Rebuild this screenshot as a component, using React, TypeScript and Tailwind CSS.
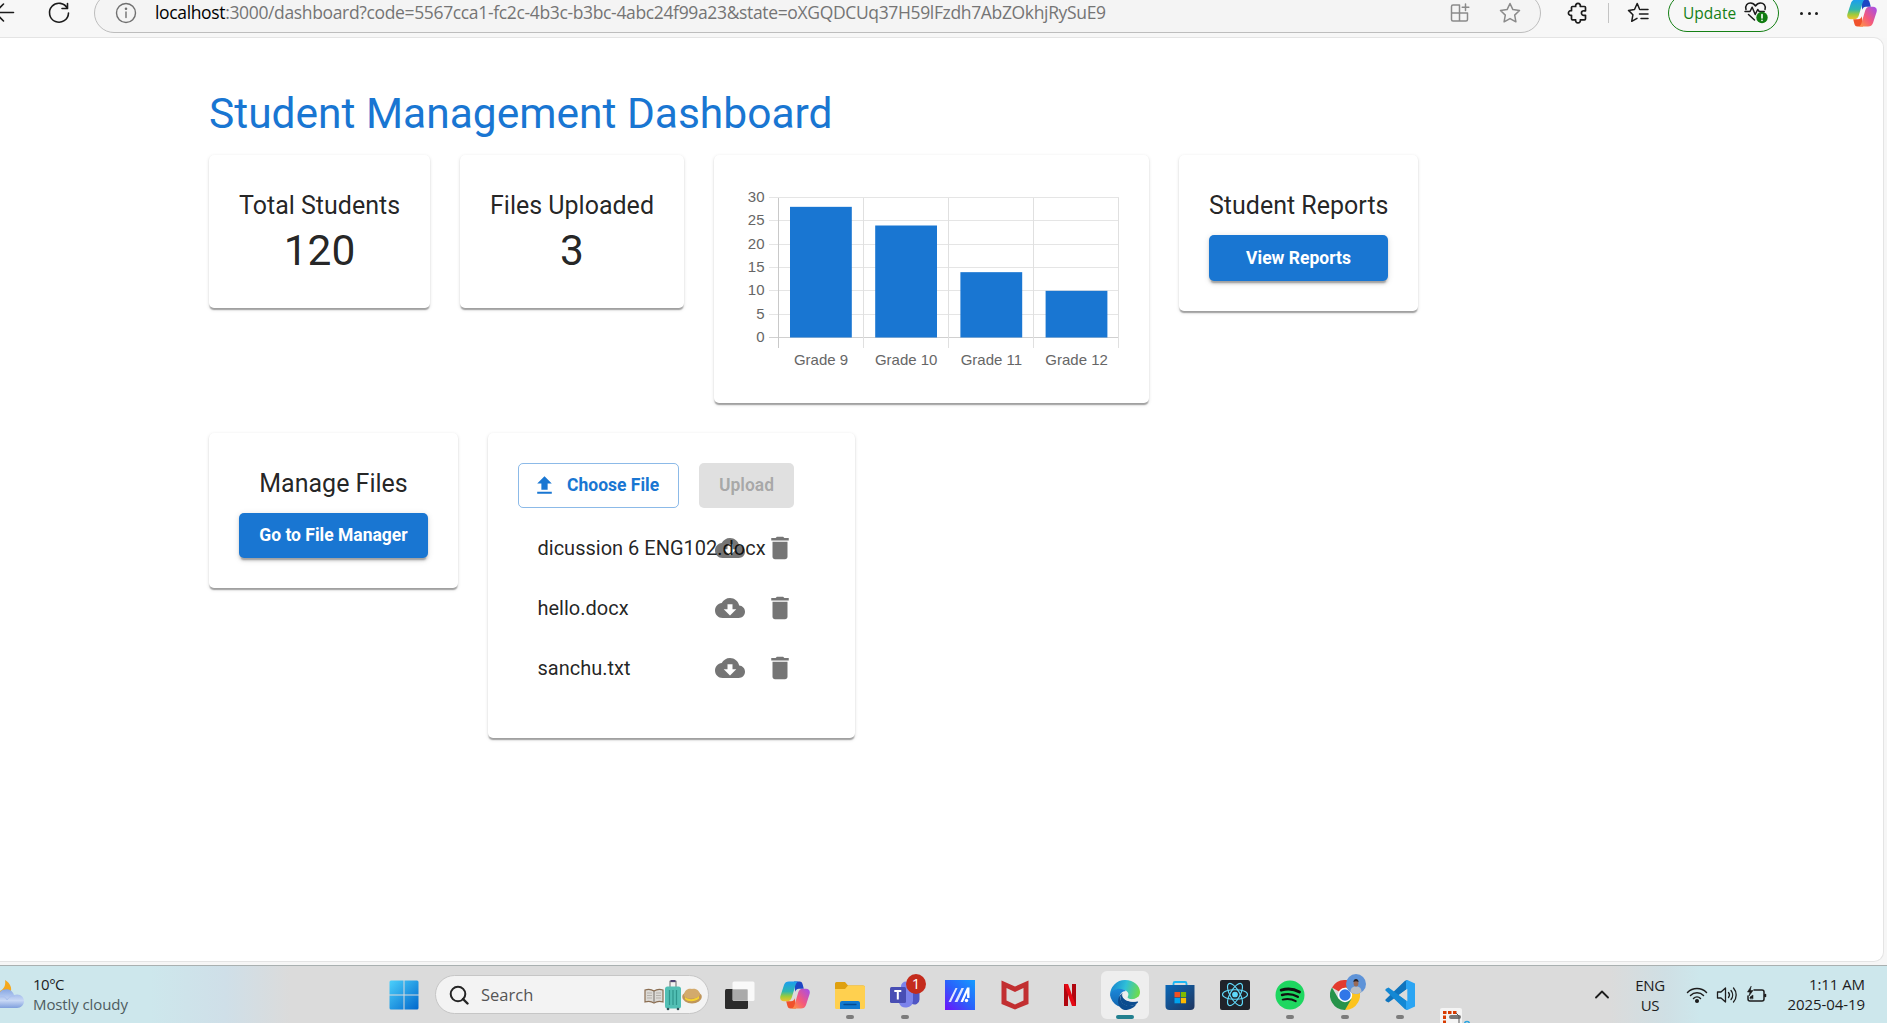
import React from "react";

const SEGOE = "font-['Open_Sans','Noto_Sans',sans-serif]";

function BackIcon() {
  return (
    <svg className="-ml-[9px] shrink-0" width="24" height="24" viewBox="0 0 24 24" fill="none" stroke="#1b1b1b" strokeWidth="1.6" strokeLinecap="round" strokeLinejoin="round">
      <path d="M22.500 11.500H4M12.500 3l-8.500 8.500 8.500 8.500" />
    </svg>
  );
}

function ReloadIcon() {
  return (
    <svg className="shrink-0" width="24" height="24" viewBox="0 0 24 24" fill="none" stroke="#1b1b1b" strokeWidth="1.6" strokeLinecap="round" strokeLinejoin="round">
      <path d="M20.500 7.500A9.500 9.500 0 1 0 21.500 12M20.500 2.500v5h-5.500" />
    </svg>
  );
}

function InfoIcon() {
  return (
    <svg className="shrink-0" width="22" height="22" viewBox="0 0 22 22" fill="none" stroke="#707070" strokeWidth="1.4" strokeLinecap="round">
      <circle cx="11" cy="11" r="9.500" />
      <path d="M11 10v5.500" />
      <circle cx="11" cy="6.800" r=".6" fill="#707070" />
    </svg>
  );
}

function AppsIcon() {
  return (
    <svg className="shrink-0" width="20" height="20" viewBox="0 0 20 20" fill="none" stroke="#8a8a8a" strokeWidth="1.500" strokeLinejoin="round" strokeLinecap="round">
      <path d="M9.500 2H3A1.500 1.500 0 0 0 1.500 3.500v13A1.500 1.500 0 0 0 3 18h13a1.500 1.500 0 0 0 1.500-1.500V10h-16M9.500 2v16M15.500 1v6.500M12.200 4.200h6.600" />
    </svg>
  );
}

function StarIcon() {
  return (
    <svg className="shrink-0" width="22" height="22" viewBox="0 0 22 22" fill="none" stroke="#8a8a8a" strokeWidth="1.500" strokeLinejoin="round">
      <path d="M11 1.500l2.900 6.100 6.600.9-4.800 4.600 1.200 6.700-5.900-3.200-5.900 3.200 1.200-6.700L1.500 8.500l6.600-.9z" />
    </svg>
  );
}

function PuzzleIcon() {
  return (
    <svg className="shrink-0" width="22" height="22" viewBox="0 0 22 22" fill="none" stroke="#1b1b1b" strokeWidth="1.700" strokeLinejoin="round">
      <path d="M5.500 4.500h3.200a2.400 2.400 0 1 1 4.600 0h4.200a1 1 0 0 1 1 1v3.300h-1.300a2.300 2.300 0 1 0 0 4.500h1.300v3.500a1 1 0 0 1-1 1h-4.200a2.400 2.400 0 1 1-4.600 0H5.500a1 1 0 0 1-1-1v-3.500a2.400 2.400 0 1 1 0-4.600V5.500a1 1 0 0 1 1-1z" />
    </svg>
  );
}

function FavoritesIcon() {
  return (
    <svg className="shrink-0" width="22" height="22" viewBox="0 0 22 22" fill="none" stroke="#1b1b1b" strokeWidth="1.500" strokeLinejoin="round" strokeLinecap="round">
      <path d="M13 7.500h-.3L10.200 1.500 7.500 7.500l-6 .9 4.400 4.400-1.200 6.500 5.300-3M14 7.500h7M12.500 12h8.500M14 16.500h7" />
    </svg>
  );
}

function HealthIcon() {
  return (
    <svg className="shrink-0" width="24" height="24" viewBox="0 0 24 24" fill="none" stroke="#1b1b1b" strokeWidth="1.500" strokeLinejoin="round" strokeLinecap="round">
      <path d="M2 8.500C.8 4.500 3.500 2 6.500 2c2.300 0 4 1.500 5 3 1-1.500 2.700-3 5-3 3 0 5.700 2.500 4.500 6.500M1 10.500h5l2.200-4.300 3 7.300 2.500-5 1.500 2h5M4.500 13.500l6 5.500" />
      <circle cx="18" cy="16.500" r="5.700" fill="#107c10" stroke="none" />
      <path d="M18 13.500V17M18 19.400v.1" stroke="#fff" strokeWidth="1.600" />
    </svg>
  );
}

function CopilotIcon({ id }: { id: string }) {
  return (
    <svg className="shrink-0" width="30" height="28" viewBox="0 0 30 28">
      <defs>
        <linearGradient id={id + "a"} x1="0" y1="0" x2="0" y2="1">
          <stop offset="0" stopColor="#1b9df0" />
          <stop offset=".5" stopColor="#2fb7b0" />
          <stop offset=".75" stopColor="#9ccb3b" />
          <stop offset="1" stopColor="#f2c230" />
        </linearGradient>
        <linearGradient id={id + "b"} x1="0" y1="1" x2="1" y2="0">
          <stop offset="0" stopColor="#ff9b3d" />
          <stop offset=".45" stopColor="#f4597b" />
          <stop offset="1" stopColor="#a14df0" />
        </linearGradient>
      </defs>
      <path d="M14 .5h5.500c2 0 2.700 1.200 3.200 3l1.100 4.200H19c-2 0-3.200 1-3.800 3z" fill="#1d46c4" />
      <path d="M16 27.500h-5.500c-2 0-2.700-1.200-3.200-3l-1.100-4.200H11c2 0 3.200-1 3.800-3z" fill="#f0522c" />
      <path d="M9 .5h9.500c-1.800.5-2.500 2-3 3.600l-3.700 12.400c-.7 2.400-2 3.800-4.600 3.800H4c-3 0-4.500-2.200-3.500-5.500L4 4C4.800 1.600 6.500.5 9 .5z" fill={"url(#" + id + "a)"} />
      <path d="M21 27.500h-9.500c1.800-.5 2.500-2 3-3.600l3.700-12.400c.7-2.400 2-3.800 4.600-3.800H26c3 0 4.500 2.200 3.500 5.500L26 24c-.8 2.400-2.500 3.500-5 3.500z" fill={"url(#" + id + "b)"} />
    </svg>
  );
}

function BrowserBar() {
  return (
    <header className="h-[38px] shrink-0 overflow-hidden bg-[#f7f7f7]">
      <div className="-mt-[7px] flex h-[40px] items-center">
        <BackIcon />
        <div className="ml-[32px] flex"><ReloadIcon /></div>
        <div className="ml-[23px] flex h-[40px] w-[1447px] shrink-0 items-center rounded-full border border-[#bdbdbd] bg-[#f4f4f4] pl-[20px] pr-[19px]">
          <InfoIcon />
          <span className={"ml-[18px] w-[953px] whitespace-nowrap pb-[2px] text-[17.5px] leading-6 tracking-[-0.35px] text-[#757575] " + SEGOE}>
            <span className="text-black">localhost</span>
            :3000/dashboard?code=5567cca1-fc2c-4b3c-b3bc-4abc24f99a23&amp;state=oXGQDCUq37H59lFzdh7AbZOkhjRySuE9
          </span>
          <span className="ml-auto flex"><AppsIcon /></span>
          <span className="ml-[29px] flex"><StarIcon /></span>
        </div>
        <div className="ml-[26px] flex"><PuzzleIcon /></div>
        <div className="ml-[19px] h-5 w-px bg-[#c4c4c4]" />
        <div className="ml-[18px] flex"><FavoritesIcon /></div>
        <div className="ml-[19px] flex h-[38px] w-[111px] shrink-0 items-center rounded-full border-[1.5px] border-[#158015] pl-[14px]">
          <span className={"w-[61px] whitespace-nowrap pb-px text-[15.5px] leading-5 text-[#158015] " + SEGOE}>Update</span>
          <HealthIcon />
        </div>
        <div className="ml-[21px] flex w-[18px] justify-between">
          <i className="size-[3px] rounded-full bg-[#1b1b1b]" />
          <i className="size-[3px] rounded-full bg-[#1b1b1b]" />
          <i className="size-[3px] rounded-full bg-[#1b1b1b]" />
        </div>
        <div className="ml-[29px] flex"><CopilotIcon id="cb" /></div>
      </div>
    </header>
  );
}

const CARD =
  "rounded-[5px] bg-white p-[30px] shadow-[0px_2.5px_1.25px_-1.25px_rgba(0,0,0,0.2),0px_1.25px_1.25px_0px_rgba(0,0,0,0.14),0px_1.25px_3.75px_0px_rgba(0,0,0,0.12)]";
const H6 = "h-[40px] whitespace-nowrap pt-px text-center text-[25px] leading-[40px]";
const BUTTON =
  "mt-[10px] flex w-full items-center justify-center whitespace-nowrap rounded-[5px] bg-[#1976d2] text-[17.5px] font-bold text-white shadow-[0px_3.75px_1.25px_-2.5px_rgba(0,0,0,0.2),0px_2.5px_2.5px_0px_rgba(0,0,0,0.14),0px_1.25px_6.25px_0px_rgba(0,0,0,0.12)]";

function Stat({ label, value, width }: { label: string; value: string; width: string }) {
  return (
    <section className={CARD + " h-[153px] " + width}>
      <h2 className={H6}>{label}</h2>
      <p className="text-center text-[42.5px] leading-[52px]">{value}</p>
    </section>
  );
}

const grades = [
  { name: "Grade 9", count: 28 },
  { name: "Grade 10", count: 24 },
  { name: "Grade 11", count: 14 },
  { name: "Grade 12", count: 10 },
];

function GradeChart() {
  const left = 34.5;
  const base = 153;
  const unit = 140 / 30;
  return (
    <svg width="375" height="188" viewBox="0 0 375 188" fontFamily="'Liberation Sans', Arial, sans-serif" fontSize="15" fill="#666">
      {[0, 5, 10, 15, 20, 25, 30].map((v) => {
        const y = Math.round(base - v * unit) - 0.5;
        return (
          <g key={v}>
            <path d={`M25 ${y}H375`} stroke={v === 0 ? "#d0d0d0" : "#e5e5e5"} />
            <text x="20.500" y={y + 4.5} textAnchor="end">{v}</text>
          </g>
        );
      })}
      {[0, 1, 2, 3, 4].map((i) => (
        <path key={i} d={`M${Math.round(left + i * 85) - 0.5} 13V163`} stroke={i === 0 ? "#c9c9c9" : "#e0e0e0"} />
      ))}
      {grades.map((g, i) => (
        <g key={g.name}>
          <rect x={left + i * 85.2 + 11.5} y={base - g.count * unit - 0.5} width="61.8" height={g.count * unit} fill="#1976d2" />
          <text x={left + i * 85.2 + 42.5} y="180" textAnchor="middle">{g.name}</text>
        </g>
      ))}
    </svg>
  );
}

function FileRow({ name }: { name: string }) {
  return (
    <li className="flex h-[60px] items-center pl-[19.5px]">
      <div className="w-[172px] whitespace-nowrap text-[20px] leading-[30px]">{name}</div>
      <div className="ml-[5.5px] flex items-center gap-5 text-black/54">
        <svg width="30" height="30" viewBox="0 0 24 24" fill="currentColor">
          <path d="M19.350 10.040C18.670 6.590 15.640 4 12 4 9.110 4 6.600 5.640 5.350 8.040 2.340 8.360 0 10.910 0 14c0 3.310 2.690 6 6 6h13c2.760 0 5-2.240 5-5 0-2.640-2.050-4.780-4.650-4.960zM17 13l-5 5-5-5h3V9h4v4h3z" />
        </svg>
        <svg width="30" height="30" viewBox="0 0 24 24" fill="currentColor">
          <path d="M6 19c0 1.100.9 2 2 2h8c1.100 0 2-.9 2-2V7H6v12zM19 4h-3.500l-1-1h-5l-1 1H5v2h14V4z" />
        </svg>
      </div>
    </li>
  );
}

function Dashboard() {
  return (
    <main className="h-[925px] w-[1884px] rounded-r-[10px] border border-l-0 border-[#e4e4e4] bg-white pl-[209px] pt-[50px] font-[Roboto,sans-serif] text-black/87">
      <h1 className="mb-[14px] whitespace-nowrap text-[42.5px] leading-[52.5px] text-[#1976d2]">Student Management Dashboard</h1>
      <div className="flex items-start gap-[30px]">
        <Stat label="Total Students" value="120" width="w-[221px]" />
        <Stat label="Files Uploaded" value="3" width="w-[224px]" />
        <section className={CARD + " h-[248px] w-[435px]"}><GradeChart /></section>
        <section className={CARD + " w-[239px]"}>
          <h2 className={H6}>Student Reports</h2>
          <button className={BUTTON + " h-[46px] pt-px"}>View Reports</button>
        </section>
      </div>
      <div className="mt-[30px] flex items-start gap-[30px]">
        <section className={CARD + " w-[249px]"}>
          <h2 className={H6}>Manage Files</h2>
          <button className={BUTTON + " h-[45px]"}>Go to File Manager</button>
        </section>
        <section className={CARD + " h-[305px] w-[367px]"}>
          <div className="flex h-[45px] gap-5 text-[17.5px] font-bold">
            <button className="flex w-[161px] items-center rounded-[5px] border border-[#1976d2]/50 pl-[13px] text-[#1976d2]">
              <svg className="mr-[10px]" width="25" height="25" viewBox="0 0 24 24" fill="currentColor"><path d="M5 20h14v-2H5v2zM5 10h4v6h6v-6h4l-7-7-7 7z" /></svg>
              Choose File
            </button>
            <button className="w-[95px] rounded-[5px] bg-[#e0e0e0] text-black/26">Upload</button>
          </div>
          <ul className="pt-[10px]">
            <FileRow name="dicussion 6 ENG102.docx" />
            <FileRow name="hello.docx" />
            <FileRow name="sanchu.txt" />
          </ul>
        </section>
      </div>
    </main>
  );
}

function WeatherIcon() {
  return (
    <svg className="shrink-0" width="24" height="32" viewBox="0 0 24 32">
      <defs>
        <linearGradient id="cloud" x1="0" y1="0" x2="0" y2="1">
          <stop offset="0" stopColor="#88a8e4" />
          <stop offset=".6" stopColor="#c8d8f5" />
          <stop offset="1" stopColor="#7f9fdd" />
        </linearGradient>
      </defs>
      <path d="M5 1c5 3 8 8 5 14L0 17V12c4-2 6-6 5-11z" fill="#f5a91c" />
      <path d="M0 13c3-4 12-4 14 3 6-2 10 2 10 6s-3 7-7 7H0z" fill="url(#cloud)" />
      <path d="M0 18c3-1 6 0 7 3 2-3 5-5 8-4" fill="none" stroke="#a9c0ee" />
    </svg>
  );
}

function WindowsIcon() {
  return (
    <svg width="30" height="30" viewBox="0 0 30 30">
      <defs>
        <linearGradient id="win" x1="0" y1="0" x2="1" y2="1">
          <stop offset="0" stopColor="#4cd0fb" />
          <stop offset="1" stopColor="#0067cc" />
        </linearGradient>
      </defs>
      <path fill="url(#win)" d="M.5 2a1.500 1.500 0 0 1 1.500-1.500h12.500v14H.5zM15.500.5H28A1.500 1.500 0 0 1 29.500 2v12.500h-14zM.5 15.500h14v14H2A1.500 1.500 0 0 1 .5 28zM15.500 15.500h14V28a1.500 1.500 0 0 1-1.500 1.500H15.500z" />
    </svg>
  );
}

function SearchBox() {
  return (
    <div className="ml-[16.5px] flex h-[39px] w-[274px] shrink-0 items-center rounded-full border border-[#c6c6c6] bg-[#f3f3f3] pl-[13px] pr-[6px]">
      <svg width="20" height="20" viewBox="0 0 20 20" fill="none" stroke="#242424" strokeWidth="2" strokeLinecap="round">
        <circle cx="9" cy="9" r="7.300" />
        <path d="M14 14l4.500 4.500" strokeWidth="2.400" />
      </svg>
      <span className={"ml-[12px] text-[16.5px] leading-5 text-[#555] " + SEGOE}>Search</span>
      <svg className="ml-auto" width="58" height="32" viewBox="0 0 58 32">
        <path d="M1 11c3-1 6-1 9 1 3-2 6-2 9-1v12c-3-1-6-1-9 1-3-2-6-2-9-1z" fill="#dcdad6" stroke="#8b6e52" strokeWidth="1.200" />
        <path d="M10 12v11" stroke="#77706a" />
        <path d="M3 14h5M3 16.500h5M3 19h5M12 14h5M12 16.500h5M12 19h5" stroke="#b5b1ab" fill="none" />
        <path d="M26 8V2.500h6V8" fill="none" stroke="#888" strokeWidth="1.300" />
        <path d="M26.500 2h5" stroke="#4d4372" strokeWidth="2" />
        <rect x="21" y="7.500" width="16" height="22" rx="2.500" fill="#52bfb4" />
        <path d="M25.500 11v15M29 11v15M32.500 11v15" stroke="#2f968d" strokeWidth="1.200" />
        <circle cx="24" cy="30" r="1.300" fill="#32535a" /><circle cx="34" cy="30" r="1.300" fill="#32535a" />
        <ellipse cx="48" cy="18" rx="9.800" ry="6.500" fill="#c0965a" />
        <path d="M40 17c0-6 4-8 8-7 4-1 8 2 8 6-2 4-12 5-16 1z" fill="#d3aa6c" />
        <path d="M41 18c3 3 10 3 14-1v2.500c-4 3.500-11 3.500-14 .5z" fill="#f7d32f" />
      </svg>
    </div>
  );
}

function TaskViewIcon() {
  return (
    <svg width="30" height="30" viewBox="0 0 30 30">
      <rect y="9" width="23" height="20" rx="1.500" fill="#2b2b2b" />
      <rect x="7.500" y="1.500" width="22" height="19.500" rx="1.500" fill="#fff" fillOpacity=".82" />
      <path d="M8 9.500h14.500v11.200H8z" fill="#aaa" />
    </svg>
  );
}

function FolderIcon() {
  return (
    <svg width="30" height="30" viewBox="0 0 30 30">
      <path d="M0 3.500A1.500 1.500 0 0 1 1.500 2H10l3 3.500h15A2 2 0 0 1 30 7.500V15H0z" fill="#dfa00f" />
      <path d="M0 9h10L13 5.500h15.500A1.500 1.500 0 0 1 30 7v20.500a1.500 1.500 0 0 1-1.500 1.500h-27A1.500 1.500 0 0 1 0 27.500z" fill="#ffd04f" />
      <path d="M5 29v-6a2 2 0 0 1 2-2h16a2 2 0 0 1 2 2v6z" fill="#1179cf" />
      <path d="M9 24.500h12" stroke="#064b91" strokeWidth="1.300" strokeLinecap="round" />
    </svg>
  );
}

function TeamsIcon() {
  return (
    <svg width="30" height="30" viewBox="0 0 30 30">
      <circle cx="16" cy="6.500" r="5" fill="#7b83eb" />
      <path d="M20 11h9.500v8.500a5 5 0 0 1-8 4z" fill="#4f56c4" />
      <path d="M9 11h14v10a7.300 7.300 0 0 1-14 2z" fill="#7b83eb" />
      <rect y="7" width="16" height="16" rx="1.500" fill="#484eb4" />
      <path d="M4.300 11h7M7.800 11v8.500" stroke="#fff" strokeWidth="2" />
    </svg>
  );
}

function MsiIcon() {
  return (
    <svg width="30" height="30" viewBox="0 0 30 30">
      <defs>
        <linearGradient id="msi" x1="1" y1="0" x2="0" y2="1">
          <stop offset="0" stopColor="#149cff" />
          <stop offset=".5" stopColor="#2962fb" />
          <stop offset="1" stopColor="#7010fa" />
        </linearGradient>
      </defs>
      <path d="M0 0h30v30H0z" fill="url(#msi)" />
      <path d="M3.500 22L10.500 8h2L6 22zM9.500 22L16.500 8h2.500L12.500 22z" fill="#dfe6ff" />
      <path d="M15.500 22L22 7.500h2.500V18h-2.400v-5.500L18 22z" fill="#fff" />
      <circle cx="21.500" cy="20.500" r="1.700" fill="#fff" />
    </svg>
  );
}

function McAfeeIcon() {
  return (
    <svg width="30" height="30" viewBox="0 0 30 30">
      <path d="M1.500.5L15 6.500 28.500.5V24L15 29.500 1.500 24zM6.500 8v12.500L15 24.500l8.500-4V8L15 12z" fill="#c22f31" fillRule="evenodd" />
    </svg>
  );
}

function NetflixIcon() {
  return (
    <svg width="30" height="30" viewBox="0 0 30 30">
      <path d="M9 4h4v22H9zM17 4h4v22h-4z" fill="#b1060f" />
      <path d="M9 4h4l8 22h-4z" fill="#e50914" />
    </svg>
  );
}

function EdgeIcon() {
  return (
    <svg width="30" height="30" viewBox="0 0 30 30">
      <defs>
        <linearGradient id="edge1" x1="0" y1=".3" x2="1" y2=".5">
          <stop offset="0" stopColor="#1683cf" />
          <stop offset=".5" stopColor="#2fbfd8" />
          <stop offset="1" stopColor="#6edc4b" />
        </linearGradient>
        <linearGradient id="edge2" x1="0" y1="0" x2="0" y2="1">
          <stop offset="0" stopColor="#1c88d9" />
          <stop offset="1" stopColor="#1164ae" />
        </linearGradient>
      </defs>
      <path d="M0 15A15 15 0 0 1 15 0c9 0 15 6 15 12 0 5-4 7.500-7.500 7.500-4 0-5.500-1.500-5-2.500 1.500-2 1-4 0-5C14 8 4 8 0 15z" fill="url(#edge1)" />
      <path d="M0 15C1 9 11 6.500 16 11c-4 0-6.500 3-6.500 6.500 0 6 5 10 11 9A15 15 0 0 1 0 15z" fill="url(#edge2)" />
      <path d="M12.500 13c-6 7 2 17 14 11-2 3.500-6.500 6-11.500 6-7-1-10-12-2.500-17z" fill="#0c4c8f" />
      <path d="M12.500 13c-2 5 4 10 15 8.500.7 0 .7.500.4 1-6 7-20 3-17-6 .3-1.500.8-2.500 1.600-3.500z" fill="#0c4c8f" />
      <path d="M13 12.700c2-1.400 5-.5 5 2 0 1.500-1 2-.5 3 1.500 2 7 2 10-.5 1-1 2.500 1 0 3.500-7 3-16.500-1-14.500-8z" fill="#eee" />
    </svg>
  );
}

function StoreIcon() {
  return (
    <svg width="30" height="30" viewBox="0 0 30 30">
      <defs>
        <linearGradient id="store" x1="0" y1="0" x2="1" y2="1">
          <stop offset="0" stopColor="#0a68b8" />
          <stop offset="1" stopColor="#20365f" />
        </linearGradient>
      </defs>
      <path d="M8.500 6V3.500A1.500 1.500 0 0 1 10 2h10a1.500 1.500 0 0 1 1.500 1.500V6" stroke="#1cb7f5" strokeWidth="1.800" fill="none" />
      <path d="M.5 5h29v21a4 4 0 0 1-4 4h-21a4 4 0 0 1-4-4z" fill="url(#store)" />
      <path d="M9.500 12H15v5.300H9.500z" fill="#f25022" />
      <path d="M15.800 12h5.300v5.300h-5.300z" fill="#7fba00" />
      <path d="M9.500 18H15v5.300H9.500z" fill="#00a4ef" />
      <path d="M15.800 18h5.300v5.300h-5.300z" fill="#ffb900" />
    </svg>
  );
}

function ReactIcon() {
  return (
    <svg width="30" height="30" viewBox="0 0 30 30" fill="none" stroke="#61dafb" strokeWidth="1.100">
      <rect width="30" height="30" rx="2" fill="#20232a" stroke="none" />
      <ellipse cx="15" cy="14.500" rx="12.500" ry="4.800" />
      <ellipse cx="15" cy="14.500" rx="12.500" ry="4.800" transform="rotate(60 15 14.500)" />
      <ellipse cx="15" cy="14.500" rx="12.500" ry="4.800" transform="rotate(120 15 14.500)" />
      <circle cx="15" cy="14.500" r="2.300" fill="#61dafb" />
    </svg>
  );
}

function SpotifyIcon() {
  return (
    <svg width="30" height="30" viewBox="0 0 30 30" fill="none" stroke="#111" strokeLinecap="round">
      <circle cx="15" cy="15" r="14.500" fill="#1ed760" stroke="none" />
      <path d="M6.200 10.200c6-1.800 13-1.200 18.300 1.900" strokeWidth="2.900" />
      <path d="M7 15c5-1.400 11-.9 15.800 1.800" strokeWidth="2.400" />
      <path d="M7.700 19.600c4.500-1.100 9-.7 13 1.600" strokeWidth="2" />
    </svg>
  );
}

function ChromeIcon() {
  return (
    <svg width="30" height="30" viewBox="0 0 30 30">
      <path d="M15 15L2 7.500A15 15 0 0 1 28 7.500z" fill="#e33b2e" />
      <path d="M15 15V7.500h13A15 15 0 0 1 15 30z" fill="#fcc31e" />
      <path d="M15 15l6.500 3.800L15 30A15 15 0 0 1 2 7.500l6.500 11.300z" fill="#27934a" />
      <circle cx="15" cy="15" r="7.200" fill="#fff" />
      <circle cx="15" cy="15" r="5.700" fill="#3077e8" />
    </svg>
  );
}

function VsCodeIcon() {
  return (
    <svg width="30" height="30" viewBox="0 0 30 30">
      <path d="M22.500 8.700L3.500 22.500 1 21.200a1.300 1.300 0 0 1 0-2.200L20 .8 22.300 0z" fill="#0f74bd" />
      <path d="M22.500 21.300L3.500 7.500 1 8.800a1.300 1.300 0 0 0 0 2.200L20 29.200l2.300.8z" fill="#1388d4" />
      <path d="M22.300 0L30 3.500v23L22.300 30l-1.300-1.200V1.200z" fill="#2ba5f3" />
      <path d="M22.300 8.700v12.600L14 15z" fill="#dbdbdb" />
    </svg>
  );
}

function Task({ children, running, active }: { children: React.ReactNode; running?: boolean; active?: boolean }) {
  return (
    <div className={"relative flex h-[48px] w-[48px] shrink-0 items-center justify-center rounded-[6px] " + (active ? "bg-[#eeeeee]" : "")}>
      {children}
      {running && <span className={"absolute bottom-0 h-1 rounded-full " + (active ? "w-[18px] bg-[#22808f]" : "w-2 bg-[#7c7c7c]")} />}
    </div>
  );
}

function Taskbar() {
  return (
    <footer className={"flex h-[58px] shrink-0 items-center overflow-hidden border-t border-[#a9b0b0] bg-[linear-gradient(90deg,#cde7ec_0px,#cde7ec_150px,#cfdfe8_225px,#dbdbdb_290px,#dbdbdb_1610px,#cfdfe4_1665px,#cde7ec_1700px)] text-[15px] " + SEGOE}>
      <WeatherIcon />
      <div className="ml-[9px] w-[347px] pb-[2px] leading-[20px]">
        <div className="tracking-[-0.5px] text-[#1d1d1d]">10°C</div>
        <div className="tracking-[-0.1px] text-[#4e5c60]">Mostly cloudy</div>
      </div>
      <div className="ml-[8.5px] flex w-[30px] shrink-0"><WindowsIcon /></div>
      <SearchBox />
      <div className="ml-[7px] flex gap-[7px]">
        <Task><TaskViewIcon /></Task>
        <Task><CopilotIcon id="tb" /></Task>
        <Task running><FolderIcon /></Task>
        <Task running>
          <TeamsIcon />
          <span className="absolute left-[25px] top-[3px] flex size-5 items-center justify-center rounded-full bg-[#c42b1c] text-[15px] text-white">1</span>
        </Task>
        <Task><MsiIcon /></Task>
        <Task><McAfeeIcon /></Task>
        <Task><NetflixIcon /></Task>
        <Task running active><EdgeIcon /></Task>
        <Task><StoreIcon /></Task>
        <Task><ReactIcon /></Task>
        <Task running><SpotifyIcon /></Task>
        <Task running>
          <ChromeIcon />
          <svg className="absolute left-[25px] top-[3px]" width="20" height="20" viewBox="0 0 20 20">
            <circle cx="10" cy="10" r="10" fill="#5e93d8" />
            <path d="M4.500 18c0-4 2-5.500 5.500-5.500s5.500 1.500 5.500 5.500c-3 2.500-8 2.500-11 0z" fill="#b9bfc6" />
            <ellipse cx="10" cy="9" rx="2.400" ry="3.500" fill="#9a6a55" />
            <path d="M7.400 8c0-4 5.200-4 5.200 0-1.500-1-3.700-1-5.200 0z" fill="#252025" />
          </svg>
        </Task>
        <Task running><VsCodeIcon /></Task>
        <Task>
          <svg className="absolute left-[9px] top-[37px]" width="32" height="16" viewBox="0 0 32 16">
            <rect width="22" height="24" rx="2" fill="#f4f4f4" />
            <path d="M4.500 16V4.500H17" fill="none" stroke="#d83b01" strokeWidth="3" strokeDasharray="3.500 1.500" />
            <rect x="9" y="7" width="12" height="4" rx="2" fill="#777" />
            <path d="M16 5l3 3v8" stroke="#555" fill="none" />
            <circle cx="27" cy="16" r="2.500" stroke="#2ba5e0" strokeWidth="1.500" fill="none" />
          </svg>
        </Task>
      </div>
      <div className="ml-auto flex shrink-0 items-center pr-[22px] text-[#1d1d1d]">
        <svg width="14" height="9" viewBox="0 0 14 9" fill="none" stroke="#1d1d1d" strokeWidth="1.800" strokeLinecap="round" strokeLinejoin="round"><path d="M1 7.500l6-6 6 6" /></svg>
        <div className="ml-[26px] w-[30px] text-center leading-[20px] tracking-[-0.3px]"><div>ENG</div><div>US</div></div>
        <svg className="ml-[21px]" width="22" height="18" viewBox="0 0 22 18" fill="none" stroke="#1d1d1d" strokeWidth="1.500" strokeLinecap="round">
          <path d="M1.500 6.500a13.500 13.500 0 0 1 19 0M4.500 9.500a9.200 9.200 0 0 1 13 0M7.500 12.500a5 5 0 0 1 7 0" />
          <circle cx="11" cy="15" r="1.300" fill="#1d1d1d" />
        </svg>
        <svg className="ml-[8px]" width="22" height="18" viewBox="0 0 22 18" fill="none" stroke="#1d1d1d" strokeWidth="1.300" strokeLinecap="round" strokeLinejoin="round">
          <path d="M1.500 6h3.500l4.500-4v14L5 12H1.500zM12.500 6.500a4 4 0 0 1 0 5M15 4.500a7 7 0 0 1 0 9M17.500 2a10.500 10.500 0 0 1 0 14" />
        </svg>
        <svg className="ml-[8px]" width="22" height="18" viewBox="0 0 22 18" fill="none" stroke="#1d1d1d" strokeWidth="1.500" strokeLinecap="round" strokeLinejoin="round">
          <path d="M8 4h8a2 2 0 0 1 2 2v7a2 2 0 0 1-2 2H4a2 2 0 0 1-2-2v-3M19.500 8.500v2" />
          <path d="M5 .5L1.500 6H4L3 10l4-5.500H4.500z" fill="#1d1d1d" strokeWidth=".6" />
          <path d="M4 12.500V11l3-2v3.500z" fill="#1d1d1d" strokeWidth=".5" />
        </svg>
        <div className="ml-[18px] w-[79px] whitespace-nowrap pb-[2px] text-right leading-[20px] tracking-[-0.08px]"><div>1:11 AM</div><div>2025-04-19</div></div>
      </div>
    </footer>
  );
}

export default function App() {
  return (
    <div className="flex h-[1023px] w-[1887px] flex-col overflow-hidden bg-[#f6f6f6]">
      <BrowserBar />
      <div className="-mt-px h-[928px] shrink-0"><Dashboard /></div>
      <Taskbar />
    </div>
  );
}
